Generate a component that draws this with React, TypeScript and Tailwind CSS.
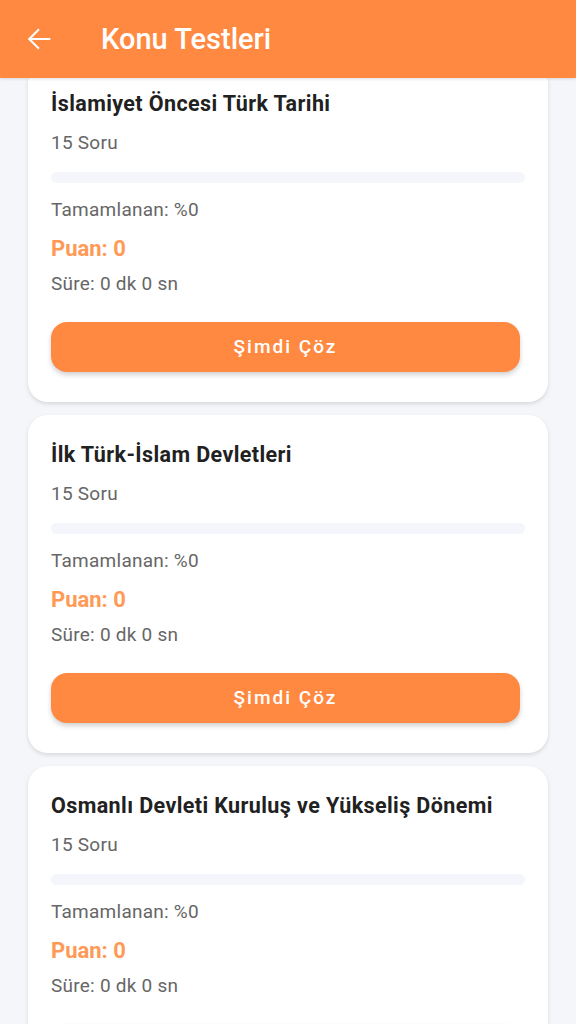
import React from "react";

/* ── Data ─────────────────────────────────────────────────────────── */
const tests = [
  { title: "İslamiyet Öncesi Türk Tarihi", questions: 15 },
  { title: "İlk Türk-İslam Devletleri", questions: 15 },
  { title: "Osmanlı Devleti Kuruluş ve Yükseliş Dönemi", questions: 15 },
];

/* ── Back arrow (material arrow_back) ─────────────────────────────── */
const BackArrow = () => (
  <svg viewBox="0 0 24 24" className="w-[34px] h-[34px]" fill="white">
    <path d="M20 11.25H6.9l5.6-5.6L11.45 4.6 4.05 12l7.4 7.4 1.05-1.05-5.6-5.6H20z" />
  </svg>
);

/* ── Test card ────────────────────────────────────────────────────── */
const TestCard = ({ title, questions }: { title: string; questions: number }) => (
  <div className="bg-white rounded-[20px] shadow-[0_2px_4px_rgba(0,0,0,0.12)] px-[23px] pt-[26px] pb-[30px] flex flex-col">
    <h2 className="text-[21.5px] leading-[28px] font-bold tracking-[0.4px] text-[#212121] whitespace-nowrap">
      {title}
    </h2>
    <p className="mt-[13px] text-[19px] leading-[24px] tracking-[0.25px] text-[#666666]">{questions} Soru</p>
    <div className="mt-[17px] h-[11px] rounded-full bg-[#F5F6FB]" />
    <p className="mt-[15px] text-[19px] leading-[24px] tracking-[0.25px] text-[#666666]">Tamamlanan: %0</p>
    <p className="mt-[13px] text-[22px] leading-[28px] font-bold text-[#FF9A56]">Puan: 0</p>
    <p className="mt-[9px] text-[19px] leading-[24px] tracking-[0.25px] text-[#666666]">Süre: 0 dk 0 sn</p>
    <button
      type="button"
      className="mt-[26px] mr-[5px] h-[50px] rounded-[16px] bg-[#FF8940] text-white text-[19px] font-medium tracking-[2px] shadow-[0_3px_5px_rgba(0,0,0,0.18)]"
    >
      Şimdi Çöz
    </button>
  </div>
);

/* ── App ──────────────────────────────────────────────────────────── */
export default function App() {
  return (
    <div className="h-[1024px] w-full flex flex-col bg-[#F5F6FA] overflow-hidden font-['Roboto',sans-serif]">
      <header className="h-[78px] shrink-0 bg-[#FF8940] flex items-center pl-[22px] relative z-10 shadow-[0_1px_3px_rgba(0,0,0,0.12)]">
        <BackArrow />
        <h1 className="ml-[45px] text-white text-[29px] font-medium leading-none">Konu Testleri</h1>
      </header>

      <main className="flex-1 overflow-hidden">
        <div className="-mt-[14px] px-[28px] flex flex-col gap-[13px]">
          {tests.map((t) => (
            <TestCard key={t.title} title={t.title} questions={t.questions} />
          ))}
        </div>
      </main>
    </div>
  );
}
